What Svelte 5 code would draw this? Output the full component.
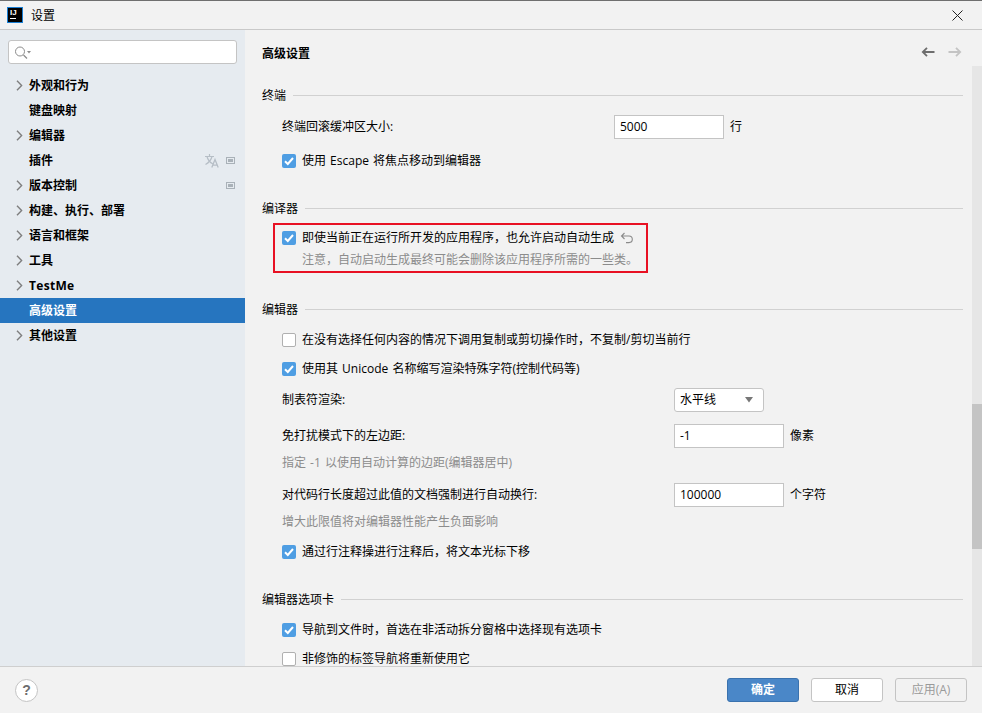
<script lang="ts">
  const navItems = [
    { label: '外观和行为', arrow: true },
    { label: '键盘映射', arrow: false },
    { label: '编辑器', arrow: true },
    { label: '插件', arrow: false, translate: true, badge: true },
    { label: '版本控制', arrow: true, badge: true },
    { label: '构建、执行、部署', arrow: true },
    { label: '语言和框架', arrow: true },
    { label: '工具', arrow: true },
    { label: 'TestMe', arrow: true, latin: true },
    { label: '高级设置', arrow: false, active: true },
    { label: '其他设置', arrow: true }
  ];
</script>

{#snippet check(on: boolean)}
  <span class="check" class:on>
    {#if on}
      <svg width="14" height="14" viewBox="0 0 14 14"><path d="M3 7.200 5.800 10 11 4" fill="none" stroke="#fff" stroke-width="2"/></svg>
    {/if}
  </span>
{/snippet}

{#snippet heading(text: string)}
  <div class="heading"><span>{text}</span><i></i></div>
{/snippet}

<div class="dialog">
  <header class="titlebar">
    <div class="logo"><b>IJ</b><i></i></div>
    <span class="title">设置</span>
    <svg class="close" width="11" height="11" viewBox="0 0 11 11"><path d="M.5.5 10.500 10.500M10.500.5 .5 10.500" stroke="#222" stroke-width="1" fill="none"/></svg>
  </header>

  <div class="body">
    <aside class="sidebar">
      <div class="search">
        <svg width="18" height="15" viewBox="0 0 18 15">
          <circle cx="6" cy="6.500" r="4.500" fill="none" stroke="#8c8c8c"/>
          <path d="M9.500 10 13 13.500" stroke="#8c8c8c" stroke-width="1.200"/>
          <path d="M13 6h4l-2 2.500z" fill="#8c8c8c"/>
        </svg>
      </div>
      <nav>
        {#each navItems as item}
          <div class="nav-row" class:active={item.active}>
            <span class="arrow">
              {#if item.arrow}
                <svg width="7" height="11" viewBox="0 0 7 11"><path d="M1 .8 5.600 5.500 1 10.200" fill="none" stroke="#7f7f7f" stroke-width="1.400"/></svg>
              {/if}
            </span>
            <span class="nav-label" class:latin={item.latin}>{item.label}</span>
            {#if item.translate}
              <svg class="translate" width="14" height="14" viewBox="0 0 14 14" fill="none" stroke="#b6bec6" stroke-width="1.200">
                <path d="M4.500 0v2M0 2.500h9M2 2.500c.8 3.500 3 6 6 7.500M7 2.500C6.200 6 4 8.500.5 10.500"/>
                <path d="M6.800 13.500 10 5.500l3.200 8M8 11.200h4" stroke-width="1.300"/>
              </svg>
            {/if}
            {#if item.badge}
              <svg class="badge" width="9" height="7" viewBox="0 0 9 7"><rect x=".5" y=".5" width="8" height="6" fill="none" stroke="#a9b1b8"/><rect x="2" y="2" width="5" height="3" fill="#a9b1b8"/></svg>
            {/if}
          </div>
        {/each}
      </nav>
    </aside>

    <main class="content">
      <div class="content-head">
        <span class="page-title">高级设置</span>
        <span class="history">
          <svg width="14" height="10" viewBox="0 0 14 10"><path d="M13.500 5H2M6 .8 1.800 5 6 9.200" fill="none" stroke="#6e6e6e" stroke-width="1.800"/></svg>
          <svg width="14" height="10" viewBox="0 0 14 10"><path d="M.5 5H12M8 .8 12.200 5 8 9.200" fill="none" stroke="#c4c4c4" stroke-width="1.800"/></svg>
        </span>
      </div>

      <div class="scroller">
        <div class="settings">
          {@render heading('终端')}
          <div class="row r-terminal">
            <span class="label w332">终端回滚缓冲区大小:</span>
            <span class="input w110">5000</span>
            <span class="unit">行</span>
          </div>
          <div class="row r-escape">{@render check(true)}<span>使用 Escape 将焦点移动到编辑器</span></div>

          <div class="gap-h">{@render heading('编译器')}</div>
          <div class="highlight">
            <div class="row">
              {@render check(true)}
              <span>即使当前正在运行所开发的应用程序，也允许启动自动生成</span>
              <svg class="undo" width="14" height="12" viewBox="0 0 14 12"><path d="M4.500 1 1.500 4l3 3M1.500 4H9a3.200 3.200 0 0 1 0 6.600H6" fill="none" stroke="#8a8a8a" stroke-width="1.100"/></svg>
            </div>
            <div class="hint">注意，自动启动生成最终可能会删除该应用程序所需的一些类。</div>
          </div>

          <div class="gap-e">{@render heading('编辑器')}</div>
          <div class="row r-e1">{@render check(false)}<span>在没有选择任何内容的情况下调用复制或剪切操作时，不复制/剪切当前行</span></div>
          <div class="row r-e2">{@render check(true)}<span>使用其 Unicode 名称缩写渲染特殊字符(控制代码等)</span></div>
          <div class="row r-e3">
            <span class="label w392">制表符渲染:</span>
            <span class="select">水平线<svg width="10" height="6" viewBox="0 0 10 6"><path d="M1 0h8L5 5.500z" fill="#777"/></svg></span>
          </div>
          <div class="row r-e4">
            <span class="label w392">免打扰模式下的左边距:</span>
            <span class="input w110">-1</span>
            <span class="unit">像素</span>
          </div>
          <div class="hint plain r-e5">指定 -1 以使用自动计算的边距(编辑器居中)</div>
          <div class="row r-e6">
            <span class="label w392">对代码行长度超过此值的文档强制进行自动换行:</span>
            <span class="input w110">100000</span>
            <span class="unit">个字符</span>
          </div>
          <div class="hint plain r-e7">增大此限值将对编辑器性能产生负面影响</div>
          <div class="row r-e8">{@render check(true)}<span>通过行注释操进行注释后，将文本光标下移</span></div>

          <div class="gap-t">{@render heading('编辑器选项卡')}</div>
          <div class="row r-t1">{@render check(true)}<span>导航到文件时，首选在非活动拆分窗格中选择现有选项卡</span></div>
          <div class="row r-t2">{@render check(false)}<span>非修饰的标签导航将重新使用它</span></div>
        </div>
        <div class="scrollbar"><div class="thumb"></div></div>
      </div>
    </main>
  </div>

  <footer class="footer">
    <span class="help">?</span>
    <div class="buttons">
      <button class="primary">确定</button>
      <button>取消</button>
      <button class="disabled">应用(A)</button>
    </div>
  </footer>
</div>

<style>
  :global(body) {
    margin: 0;
    background: #f2f2f2;
  }

  .dialog {
    width: 982px;
    height: 713px;
    display: flex;
    flex-direction: column;
    overflow: hidden;
    background: #f2f2f2;
    color: #000;
    font-family: "Open Sans", "Noto Sans CJK SC", sans-serif;
    font-size: 12px;
    line-height: 16px;
    word-spacing: 1px;
  }

  /* title bar */
  .titlebar {
    height: 28px;
    flex: none;
    display: flex;
    align-items: center;
    padding: 0 19px 0 7px;
    border-top: 1px solid #6f6f6f;
    border-bottom: 1px solid #c9c9c9;
  }
  .logo {
    width: 14px;
    height: 14px;
    background: #000;
    border: 1px solid #1a7fd4;
    margin-right: 8px;
  }
  .logo b {
    display: block;
    color: #fff;
    font: 700 8px/8px "Liberation Sans", sans-serif;
    padding: 1px 0 0 2px;
  }
  .logo i {
    display: block;
    width: 6px;
    height: 1px;
    margin: 1px 0 0 2px;
    background: #fff;
  }
  .title {
    padding-top: 2px;
  }
  .close {
    margin-left: auto;
  }

  .body {
    flex: 1;
    min-height: 0;
    display: flex;
  }

  /* sidebar */
  .sidebar {
    width: 245px;
    flex: none;
    background: #e6ebf0;
    padding-top: 10px;
    box-sizing: border-box;
  }
  .search {
    width: 229px;
    height: 24px;
    margin: 0 0 9px 8px;
    box-sizing: border-box;
    background: #fff;
    border: 1px solid #c4c4c4;
    border-radius: 3px;
    display: flex;
    align-items: center;
    padding-left: 5px;
  }
  .nav-row {
    height: 25px;
    display: flex;
    align-items: center;
    font-weight: 600;
  }
  .nav-row.active {
    background: #2675bf;
    color: #fff;
  }
  .arrow {
    width: 29px;
    flex: none;
    display: flex;
    padding-left: 16px;
    box-sizing: border-box;
  }
  .nav-label {
    flex: 1;
  }
  .nav-label.latin {
    font-weight: 700;
    letter-spacing: 0.3px;
  }
  .translate {
    margin-right: 7px;
  }
  .badge {
    margin-right: 10px;
  }

  /* content */
  .content {
    flex: 1;
    min-width: 0;
    display: flex;
    flex-direction: column;
  }
  .content-head {
    height: 36px;
    flex: none;
    box-sizing: border-box;
    padding: 12px 20px 0 17px;
    display: flex;
    align-items: center;
    justify-content: space-between;
    font-weight: 600;
  }
  .history {
    display: flex;
    gap: 13px;
    margin-top: -4px;
  }
  .scroller {
    flex: 1;
    min-height: 0;
    display: flex;
    overflow: hidden;
  }
  .settings {
    flex: 1;
    min-width: 0;
    padding: 21px 9px 0 17px;
  }
  .scrollbar {
    width: 10px;
    flex: none;
    background: #e6e6e6;
  }
  .thumb {
    height: 145px;
    margin-top: 338px;
    background: #c4c4c4;
  }

  .heading {
    display: flex;
    align-items: center;
    gap: 7px;
    height: 16px;
  }
  .heading span {
    padding-top: 2px;
  }
  .heading i {
    flex: 1;
    height: 1px;
    background: #d1d1d1;
  }

  .row {
    display: flex;
    align-items: center;
    height: 24px;
    padding-left: 20px;
  }
  .label {
    flex: none;
  }
  .w332 {
    width: 332px;
  }
  .w392 {
    width: 392px;
  }
  .input {
    height: 24px;
    box-sizing: border-box;
    background: #fff;
    border: 1px solid #c4c4c4;
    display: flex;
    align-items: center;
    padding-left: 5px;
    flex: none;
  }
  .w110 {
    width: 110px;
  }
  .unit {
    margin-left: 6px;
  }
  .select {
    width: 90px;
    height: 24px;
    box-sizing: border-box;
    background: #fff;
    border: 1px solid #c4c4c4;
    border-radius: 3px;
    display: flex;
    align-items: center;
    justify-content: space-between;
    padding: 0 9px 0 5px;
  }

  .check {
    width: 14px;
    height: 14px;
    flex: none;
    box-sizing: border-box;
    margin-right: 6px;
    background: #fff;
    border: 1px solid #b0b0b0;
    border-radius: 2px;
    display: flex;
  }
  .check.on {
    background: #4f9ee3;
    border: none;
  }

  .hint {
    color: #8c8c8c;
    padding-left: 40px;
  }
  .hint.plain {
    padding-left: 20px;
  }

  .highlight {
    width: 375px;
    height: 50px;
    box-sizing: border-box;
    margin: 7px 0 0 11px;
    padding-top: 1px;
    border: 2px solid #e81123;
  }
  .highlight .row {
    padding-left: 7px;
    height: 24px;
  }
  .highlight .hint {
    padding-left: 27px;
    margin-top: 2px;
  }
  .undo {
    margin-left: 6px;
  }

  .r-terminal { margin-top: 12px; }
  .r-escape { margin-top: 10px; }
  .gap-h { margin-top: 27px; }
  .gap-e { margin-top: 28px; }
  .r-e1 { margin-top: 11px; }
  .r-e2 { margin-top: 5px; }
  .r-e3 { margin-top: 7px; }
  .r-e4 { margin-top: 12px; }
  .r-e5 { margin-top: 7px; }
  .r-e6 { margin-top: 12px; }
  .r-e7 { margin-top: 7px; }
  .r-e8 { margin-top: 10px; }
  .gap-t { margin-top: 27px; }
  .r-t1 { margin-top: 11px; }
  .r-t2 { margin-top: 5px; }

  /* footer */
  .footer {
    height: 47px;
    flex: none;
    box-sizing: border-box;
    border-top: 1px solid #cfcfcf;
    display: flex;
    align-items: center;
    justify-content: space-between;
    padding: 0 15px;
  }
  .help {
    width: 23px;
    height: 23px;
    box-sizing: border-box;
    background: #fff;
    border: 1px solid #c4c4c4;
    border-radius: 50%;
    display: flex;
    align-items: center;
    justify-content: center;
    color: #6e6e6e;
    font: 700 14px/1 "Liberation Sans", sans-serif;
  }
  .buttons {
    display: flex;
    gap: 12px;
  }
  button {
    width: 72px;
    height: 24px;
    box-sizing: border-box;
    background: #fff;
    border: 1px solid #c4c4c4;
    border-radius: 3px;
    padding: 0;
    font: inherit;
    color: #000;
  }
  button.primary {
    background: #4a87c8;
    border-color: #3a72ae;
    color: #fff;
    font-weight: 600;
  }
  button.disabled {
    background: #f2f2f2;
    color: #9a9a9a;
  }
</style>
